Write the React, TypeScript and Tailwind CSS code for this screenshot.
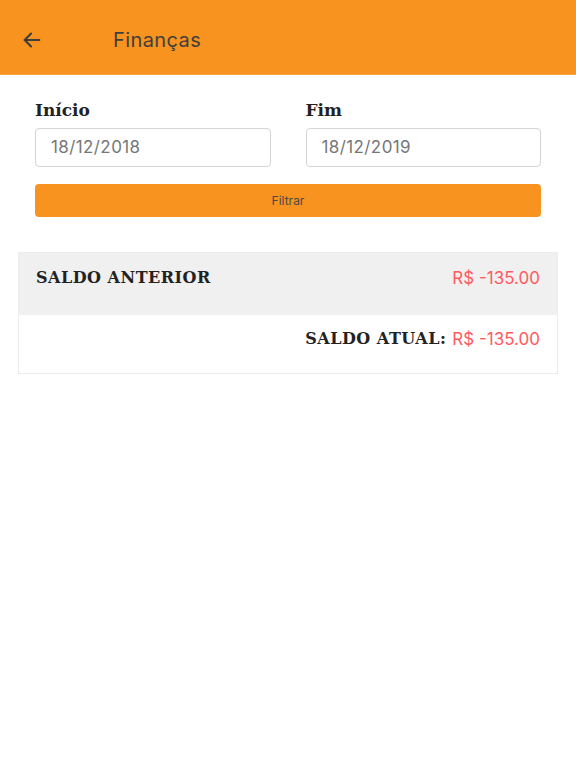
import React from "react";

const sans = { fontFamily: "Inter, 'Open Sans', sans-serif" };
const serif = { fontFamily: "'DejaVu Serif', serif" };

const DateField = ({ label, value }: { label: string; value: string }) => (
  <div className="flex flex-1 flex-col">
    <label className="mb-[7px] text-[17px] font-bold leading-[22px] text-[#222]" style={serif}>
      {label}
    </label>
    <div className="flex h-[39px] items-center rounded-[4px] border border-[#d4d4d4] bg-white px-[15px] text-[17px] tracking-[0.4px] text-[#777]" style={sans}>
      {value}
    </div>
  </div>
);

export default function App() {
  return (
    <div className="min-h-[768px] bg-white">
      <header className="flex h-[75px] items-center border-b border-[#f9a443] bg-[#f7931e] pt-[6px]">
        <button className="ml-[20px] flex h-6 w-6 items-center justify-center text-[#3d3d3d]">
          <svg width="22" height="22" viewBox="0 0 24 24" fill="none" stroke="currentColor" strokeWidth="2.2" strokeLinecap="round" strokeLinejoin="round">
            <path d="M20 12H4" />
            <path d="M11 5l-7 7 7 7" />
          </svg>
        </button>
        <h1 className="ml-[69px] text-[20px] tracking-[0.4px] text-[#3f3f3f]" style={sans}>
          Finanças
        </h1>
      </header>

      <div className="px-[35px] pt-[24px]">
        <div className="flex gap-[35px]">
          <DateField label="Início" value="18/12/2018" />
          <DateField label="Fim" value="18/12/2019" />
        </div>
        <button className="mt-[17px] flex h-[33px] w-full items-center justify-center rounded-[4px] bg-[#f7931e] text-[12px] text-[#4a4a4a]" style={sans}>
          Filtrar
        </button>
      </div>

      <div className="mx-[18px] mt-[35px] border border-[#ececec]">
        <div className="flex h-[62px] items-start justify-between bg-[#f0f0f0] px-[17px] pt-[13px]">
          <span className="text-[16px] font-bold tracking-[0.5px] text-[#222]" style={serif}>
            SALDO ANTERIOR
          </span>
          <span className="text-[17px] text-[#ff5a5f]" style={sans}>
            R$ -135.00
          </span>
        </div>
        <div className="flex h-[58px] items-start justify-end gap-[6px] bg-white px-[17px] pt-[12px]">
          <span className="text-[16px] font-bold tracking-[0.5px] text-[#222]" style={serif}>
            SALDO ATUAL:
          </span>
          <span className="text-[17px] text-[#ff5a5f]" style={sans}>
            R$ -135.00
          </span>
        </div>
      </div>
    </div>
  );
}
